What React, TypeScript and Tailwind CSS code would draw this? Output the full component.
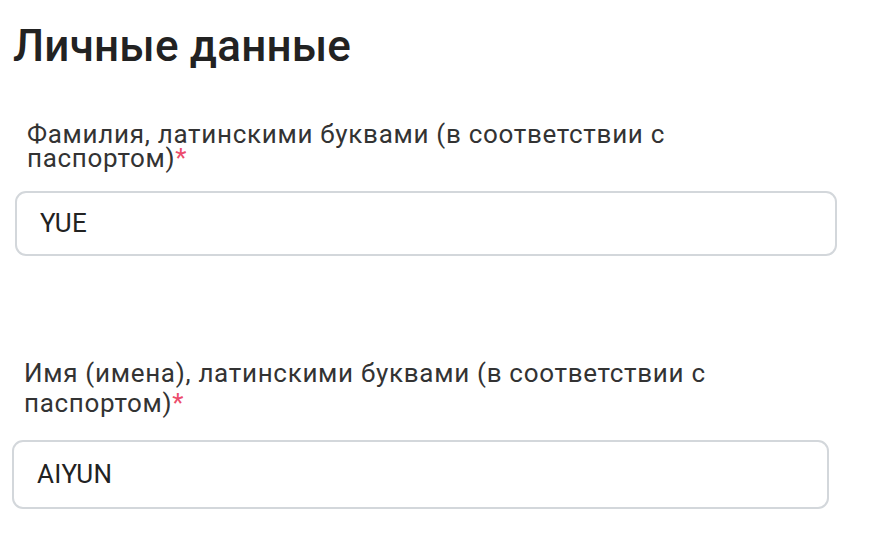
const FIELDS = [
    {
        label: "Фамилия, латинскими буквами (в соответствии с паспортом)",
        value: "YUE",
        wrap: "pl-[27px] w-[700px] leading-[24px]",
        box: "ml-[15px] w-[822px] h-[65px] mt-[21px]",
        gap: "mt-[48px]",
    },
    {
        label: "Имя (имена), латинскими буквами (в соответствии с паспортом)",
        value: "AIYUN",
        wrap: "pl-[24px] w-[740px] leading-[30px]",
        box: "ml-[12px] w-[817px] h-[69px] mt-[22px]",
        gap: "mt-[102px]",
    },
];

export default function App() {
    return (
        <div className="w-[877px] h-[543px] bg-white overflow-hidden font-['Roboto',sans-serif]">
            <h1 className="pl-[13px] pt-[18px] text-[44px] leading-[56px] font-medium tracking-[0.2px] text-[#222]">
                Личные данные
            </h1>

            {FIELDS.map((f) => (
                <div key={f.value} className={f.gap}>
                    <label className={`block text-[26px] tracking-[0.7px] text-[#333] ${f.wrap}`}>
                        {f.label}
                        <span className="text-[#ec4c6c]">*</span>
                    </label>
                    <div
                        className={`flex items-center px-[23px] border-2 border-[#d3d7db] rounded-[11px] text-[26px] tracking-[0.4px] text-[#222] ${f.box}`}
                    >
                        {f.value}
                    </div>
                </div>
            ))}
        </div>
    );
}
